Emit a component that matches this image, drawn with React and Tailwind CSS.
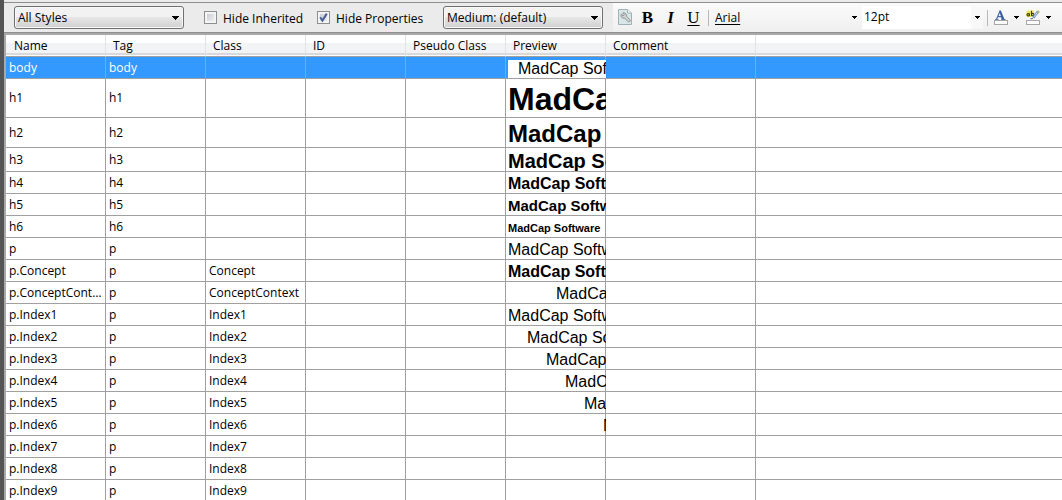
import React from "react";

const columns = ["Name", "Tag", "Class", "ID", "Pseudo Class", "Preview", "Comment"];

const plain = "text-[16px] leading-[18px]";

const rows = [
  { name: "body", tag: "body", height: "h-[22px]", preview: `${plain} pl-[10px]`, selected: true },
  { name: "h1", tag: "h1", height: "h-[39px]", preview: "text-[32px] leading-9 font-bold" },
  { name: "h2", tag: "h2", height: "h-[30px]", preview: "text-[24px] leading-[26px] font-bold" },
  { name: "h3", tag: "h3", height: "h-[24px]", preview: "text-[20px] leading-5 font-bold" },
  { name: "h4", tag: "h4", height: "h-[22px]", preview: `${plain} font-bold` },
  { name: "h5", tag: "h5", height: "h-[22px]", preview: "text-[15px] leading-[18px] font-bold" },
  { name: "h6", tag: "h6", height: "h-[22px]", preview: "text-[11px] leading-[18px] font-bold" },
  { name: "p", tag: "p", height: "h-[22px]", preview: plain },
  { name: "p.Concept", tag: "p", cls: "Concept", height: "h-[22px]", preview: `${plain} font-bold` },
  { name: "p.ConceptContext", tag: "p", cls: "ConceptContext", height: "h-[22px]", preview: `${plain} pl-[48px]` },
  { name: "p.Index1", tag: "p", cls: "Index1", height: "h-[22px]", preview: plain },
  { name: "p.Index2", tag: "p", cls: "Index2", height: "h-[22px]", preview: `${plain} pl-[19px]` },
  { name: "p.Index3", tag: "p", cls: "Index3", height: "h-[22px]", preview: `${plain} pl-[38px]` },
  { name: "p.Index4", tag: "p", cls: "Index4", height: "h-[22px]", preview: `${plain} pl-[57px]` },
  { name: "p.Index5", tag: "p", cls: "Index5", height: "h-[22px]", preview: `${plain} pl-[76px]` },
  { name: "p.Index6", tag: "p", cls: "Index6", height: "h-[22px]", preview: `${plain} pl-[95px]` },
  { name: "p.Index7", tag: "p", cls: "Index7", height: "h-[22px]" },
  { name: "p.Index8", tag: "p", cls: "Index8", height: "h-[22px]" },
  { name: "p.Index9", tag: "p", cls: "Index9", height: "h-[22px]" },
];

function Arrow({ small, className = "" }) {
  return small ? (
    <svg className={`h-[3px] w-[5px] ${className}`} viewBox="0 0 5 3" shapeRendering="crispEdges" aria-hidden="true">
      <path d="M0 0h5v1H4v1H3v1H2V2H1V1H0z" fill="#000" />
    </svg>
  ) : (
    <svg className={`h-[4px] w-[7px] ${className}`} viewBox="0 0 7 4" shapeRendering="crispEdges" aria-hidden="true">
      <path d="M0 0h7v1H6v1H5v1H4v1H3V3H2V2H1V1H0z" fill="#000" />
    </svg>
  );
}

function Dropdown({ label, value, width }) {
  return (
    <div className={`relative flex h-[23px] shrink-0 items-center ${width}`}>
      <select
        aria-label={label}
        className="h-full w-full appearance-none rounded-[3px] border border-[#707070] bg-linear-to-b from-[#f2f2f2] from-45% via-[#e6e6e6] via-50% to-[#d0d0d0] pl-[3px] text-[12px] leading-5 text-black shadow-[inset_0_0_0_1px_#f8f8f8]"
      >
        <option>{value}</option>
      </select>
      <Arrow className="pointer-events-none absolute right-[5px]" />
    </div>
  );
}

function Check({ label, checked, className }) {
  return (
    <label className={`flex shrink-0 items-center gap-[6px] text-[12px] leading-4 ${className}`}>
      <span className="relative flex size-[13px]">
        <input
          type="checkbox"
          defaultChecked={checked}
          className="peer size-[13px] appearance-none border border-[#8e8f8f] bg-linear-to-br from-[#c3c8ce] to-[#f4f4f4] shadow-[inset_0_0_0_2px_#f4f4f4]"
        />
        <svg className="pointer-events-none absolute inset-0 hidden size-[13px] peer-checked:block" viewBox="0 0 13 13" aria-hidden="true">
          <path d="M3.2 6.2 5.4 9.6 9.8 2.6" fill="none" stroke="#4a5f97" strokeWidth="2" />
        </svg>
      </span>
      <span className="pt-[2px]">{label}</span>
    </label>
  );
}

function Tool({ label, className = "", children }) {
  return (
    <button type="button" aria-label={label} className={`flex h-[24px] w-[23px] shrink-0 items-start justify-center font-['Liberation_Serif',serif] text-[17px] leading-6 text-black ${className}`}>
      {children}
    </button>
  );
}

function StyleSheetIcon() {
  return (
    <svg className="mt-[3px] h-[16px] w-[14px]" viewBox="0 0 14 16" aria-hidden="true">
      <path d="M.5.5h9l4 3.500v11.500H.5z" fill="#d9e6e8" stroke="#9fb3b6" />
      <path d="M9.500.5V4h4" fill="#f4f9fa" stroke="#9fb3b6" />
      <path d="M3.100 5.200 5 7l1.300-1.200L4.600 4c1.900-.8 4.200.7 3.900 3.200l3.500 3.700c.8 1.200-.8 2.700-2 1.700L6.600 9.100C4 9.700 2.300 7.400 3.100 5.200z" fill="#d2d2d2" stroke="#858d8f" strokeWidth=".9" />
    </svg>
  );
}

function FontColorIcon() {
  return (
    <svg className="h-[15px] w-[14px]" viewBox="0 0 14 15" aria-hidden="true">
      <path d="M1 9.500h3.500M7.200 9.500H11.500" stroke="#5f7fb8" strokeWidth="1.200" />
      <path d="M2.500 9.300 6 1.200M3.800 6.700h4" stroke="#4c6ca8" strokeWidth="1.200" fill="none" />
      <path d="M5.200.5h1.600l3.700 9H7.800z" fill="#34589c" />
      <rect x=".5" y="10.500" width="13" height="4" fill="#fff" stroke="#a6a6a6" />
    </svg>
  );
}

function HighlightIcon() {
  return (
    <svg className="h-[15px] w-[14px]" viewBox="0 0 14 15" aria-hidden="true">
      <path d="M1 .5h7v6.500H1.500L0 5.500z" fill="#f0e75c" />
      <path d="M3.400 3.200v3M3.400 4.700a1.200 1.200 0 1 0 0 .2M5.500.8v5.200M5.500 4.700a1.200 1.200 0 1 0 0-.2" fill="none" stroke="#3d3912" strokeWidth="1.100" />
      <path d="M7.300 7.800 11.800 1.800" stroke="#6d8fc4" strokeWidth="2.600" />
      <path d="M8 6.800 11.500 2.200" stroke="#d5e3f5" strokeWidth="1" />
      <path d="M10.300.8h3v1.500l-1 1.200z" fill="#a9a692" />
      <path d="M4.500 8.700 7 8.500" stroke="#777" strokeWidth="1.200" />
      <rect x=".5" y="10.500" width="13" height="4" fill="#fff" stroke="#a6a6a6" />
    </svg>
  );
}

function Separator({ className = "" }) {
  return <div className={`h-[16px] w-px shrink-0 bg-[#b8b8b8] ${className}`} />;
}

function Toolbar() {
  return (
    <div className="flex h-[31px] shrink-0 items-center border-y border-[#8f8f8f] bg-[#ebebeb] pl-[10px]">
      <Dropdown label="Style filter" value="All Styles" width="w-[170px]" />
      <Check label="Hide Inherited" className="ml-5 w-[113px]" />
      <Check label="Hide Properties" checked className="w-[126px]" />
      <Dropdown label="Medium" value="Medium: (default)" width="w-[160px]" />
      <div className="ml-[10px] flex h-full min-w-0 flex-1 items-center bg-linear-to-b from-[#fbfbfb] to-[#efefef]">
        <Tool label="Properties"><StyleSheetIcon /></Tool>
        <Tool label="Bold" className="font-bold">B</Tool>
        <Tool label="Italic" className="font-bold italic">I</Tool>
        <Tool label="Underline" className="underline underline-offset-2">U</Tool>
        <Separator className="ml-[3px]" />
        <div className="relative ml-[2px] flex w-[150px] items-center">
          <select aria-label="Font family" className="h-[22px] w-full appearance-none bg-transparent pl-[4px] text-[12px] leading-5 text-black underline underline-offset-2">
            <option>Arial</option>
          </select>
          <Arrow small className="pointer-events-none absolute right-[4px]" />
        </div>
        <div className="relative ml-px flex w-[121px] items-center bg-white">
          <select aria-label="Font size" className="h-[23px] w-full appearance-none bg-transparent pb-[2px] pl-[2px] text-[12px] leading-5 text-black">
            <option>12pt</option>
          </select>
          <span className="pointer-events-none absolute right-0 flex h-full w-[12px] items-center justify-center bg-[#f8f8f8]">
            <Arrow small />
          </span>
        </div>
        <Separator className="ml-[4px]" />
        <button type="button" aria-label="Font color" className="ml-[6px] flex shrink-0 items-center gap-[6px]">
          <FontColorIcon />
          <Arrow small />
        </button>
        <button type="button" aria-label="Highlight color" className="ml-[7px] flex shrink-0 items-center gap-[6px]">
          <HighlightIcon />
          <Arrow small />
        </button>
      </div>
    </div>
  );
}

function StyleRow({ row }) {
  const tone = row.selected ? "bg-[#3399ff] text-white" : "bg-white text-black";
  const cell = "truncate border-r border-b border-[#a0a0a0] px-[3px]";
  return (
    <tr className={`${row.height} ${tone}`}>
      <td className={cell}>{row.name}</td>
      <td className={cell}>{row.tag}</td>
      <td className={cell}>{row.cls}</td>
      <td className={cell} />
      <td className={cell} />
      <td className="border-r border-b border-[#a0a0a0] pt-[2px] pl-[2px]">
        {row.preview && (
          <div className={`relative -mr-px overflow-hidden font-['Liberation_Sans',Arial,sans-serif] whitespace-nowrap text-black ${row.selected ? "bg-white" : ""} ${row.preview}`}>
            MadCap Software
          </div>
        )}
      </td>
      <td className={cell} />
      <td className="border-b border-[#a0a0a0]" />
    </tr>
  );
}

const headerFill = "border-b border-b-[#a0a0a0] bg-[linear-gradient(#fff_38%,#f2f3f5_38%_88%,#d8d9dc_88%_93%,#fff_93%)]";

export default function App() {
  return (
    <div className="flex h-screen flex-col overflow-hidden border-l-4 border-[#555555] bg-[#ebebeb] pt-[2px] font-['Open_Sans','Noto_Sans',sans-serif] text-[12px] leading-4 text-black">
      <Toolbar />
      <div className="min-h-0 flex-1 overflow-hidden border-t-2 border-l-2 border-[#a9a9a9] bg-white">
        <table className="w-full table-fixed border-separate border-spacing-0">
          <colgroup>
            <col className="w-[100px]" />
            <col className="w-[100px]" />
            <col className="w-[100px]" />
            <col className="w-[100px]" />
            <col className="w-[100px]" />
            <col className="w-[100px]" />
            <col className="w-[150px]" />
            <col />
          </colgroup>
          <thead>
            <tr className="h-[22px]">
              {columns.map((name) => (
                <th key={name} scope="col" className={`border-r border-r-[#e0e2e5] pl-[7px] text-left font-normal first:pl-2 ${headerFill}`}>
                  {name}
                </th>
              ))}
              <td className={headerFill} />
            </tr>
          </thead>
          <tbody>
            {rows.map((row) => (
              <StyleRow key={row.name} row={row} />
            ))}
          </tbody>
        </table>
      </div>
    </div>
  );
}
